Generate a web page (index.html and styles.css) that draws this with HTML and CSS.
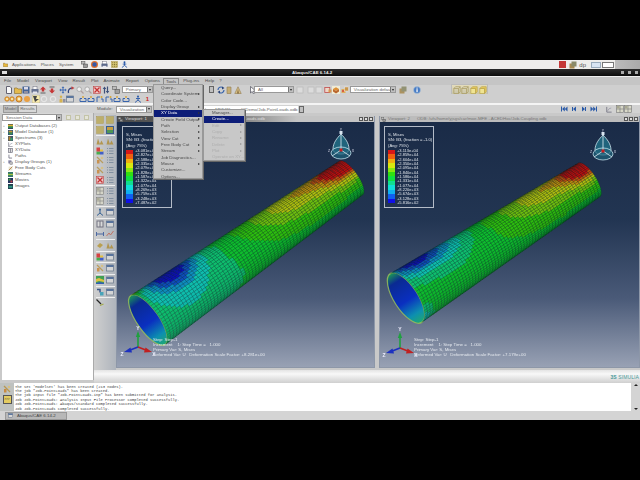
FILE: index.html
```html
<!DOCTYPE html>
<html lang="en">
<head>
<meta charset="utf-8">
<title>Abaqus/CAE 6.14-2</title>
<link rel="stylesheet" href="styles.css">
</head>
<body>
<svg class="defs" width="0" height="0" aria-hidden="true">
  <symbol id="doc" viewBox="0 0 8 8"><path d="M1.500.5h3.500l1.500 1.500v5.500h-5z" fill="#fff" stroke="#556"/></symbol>
  <symbol id="folder" viewBox="0 0 8 8"><path d="M.5 2h2.500l1 1h3.500v4.500h-7z" fill="#e8b83c" stroke="#8a6a20" stroke-width=".7"/></symbol>
  <symbol id="save" viewBox="0 0 8 8"><rect x=".5" y=".5" width="7" height="7" fill="#33558c"/><rect x="2" y="1" width="4" height="2.500" fill="#dde"/><rect x="2" y="5" width="4" height="2.500" fill="#889"/></symbol>
  <symbol id="print" viewBox="0 0 8 8"><rect x="2" y=".5" width="4" height="3" fill="#fff" stroke="#667" stroke-width=".5"/><rect x=".5" y="3" width="7" height="3.500" fill="#5a6788"/><rect x="2" y="5.500" width="4" height="2" fill="#e8e8f0"/></symbol>
  <symbol id="up" viewBox="0 0 8 8"><path d="M4 .5l3 3h-1.800v2h-2.400v-2h-1.800z" fill="#c42222"/><rect x="1.500" y="6.500" width="5" height="1" fill="#555"/></symbol>
  <symbol id="down" viewBox="0 0 8 8"><rect x="1.500" y=".5" width="5" height="1" fill="#555"/><path d="M4 7.500l3-3h-1.800v-2h-2.400v2h-1.800z" fill="#c42222"/></symbol>
  <symbol id="move" viewBox="0 0 8 8"><path d="M4 .3l1.400 1.700h-.9v1.500h1.500v-.9l1.700 1.400-1.700 1.400v-.9h-1.500v1.500h.9l-1.400 1.700-1.400-1.700h.9v-1.500h-1.500v.9l-1.700-1.400 1.700-1.400v.9h1.500v-1.500h-.9z" fill="#2f5fb0"/></symbol>
  <symbol id="rot" viewBox="0 0 8 8"><path d="M1.500 7c-.8-3 1-5 4-5" fill="none" stroke="#1c3070" stroke-width="1.300"/><path d="M4.500.2l3 1.800-3 1.800z" fill="#c03030"/></symbol>
  <symbol id="mag" viewBox="0 0 8 8"><circle cx="3.200" cy="3.200" r="2.300" fill="#f4f4f4" stroke="#aaa"/><path d="M5 5l2.500 2.500" stroke="#a99" stroke-width="1.200"/></symbol>
  <symbol id="fit" viewBox="0 0 8 8"><rect x=".5" y=".5" width="7" height="7" fill="#f4c8c8" stroke="#b33" stroke-width=".6"/><path d="M1.500 1.500l5 5M6.500 1.500l-5 5" stroke="#c41e1e" stroke-width="1.300"/></symbol>
  <symbol id="ud" viewBox="0 0 8 8"><path d="M2.500.5l1.800 2.500h-1.200v4.500h-1.200v-4.500h-1.200zM5.500 7.500l1.800-2.500h-1.200v-4.500h-1.200v4.500h-1.200z" fill="#2a3f70"/></symbol>
  <symbol id="view" viewBox="0 0 8 8"><rect x=".5" y=".5" width="4" height="3" fill="#bbb" stroke="#555" stroke-width=".6"/><rect x="3" y="3.500" width="4.500" height="4" fill="#999" stroke="#444" stroke-width=".6"/></symbol>
  <symbol id="ring" viewBox="0 0 8 8"><circle cx="4" cy="4" r="3" fill="#f0a830" stroke="#c47010"/><circle cx="4" cy="4" r="1.400" fill="#fff2c0"/></symbol>
  <symbol id="ball" viewBox="0 0 8 8"><circle cx="4" cy="4" r="3" fill="#ee9a30"/></symbol>
  <symbol id="dark" viewBox="0 0 8 8"><rect width="8" height="8" fill="#fff0a8" stroke="#888" stroke-width=".5"/><path d="M1 1h4l-1 3h3l-4 3z" fill="#333"/></symbol>
  <symbol id="faint" viewBox="0 0 8 8"><circle cx="4" cy="4" r="2.700" fill="none" stroke="#e8e8e8" stroke-width="1.200"/></symbol>
  <symbol id="fig" viewBox="0 0 8 8"><circle cx="3" cy="1.800" r="1.200" fill="#d8b040"/><path d="M1.500 7.500v-3l1.500-1 1.500 1v3z" fill="#d8b040"/><rect x="5" y="4" width="2.500" height="3.500" fill="#889"/></symbol>
  <symbol id="panel" viewBox="0 0 8 8"><rect x=".5" y="1" width="7" height="6" fill="#d8d8d8" stroke="#5a6a80" stroke-width=".7"/><rect x=".5" y="1" width="7" height="2" fill="#4c6a98"/></symbol>
  <symbol id="brk" viewBox="0 0 8 8"><path d="M1 6.500v-3h2M7 6.500v-3h-2" fill="none" stroke="#2456a8"/><circle cx="4" cy="2" r=".9" fill="#d8a020"/><rect x="1" y="6" width="6" height="1" fill="#2456a8"/></symbol>
  <symbol id="bigl" viewBox="0 0 8 8"><path d="M1 7v-5h3M7 7v-3h-2" fill="none" stroke="#2456a8"/><circle cx="5.500" cy="2" r="1" fill="#d8a020"/></symbol>
  <symbol id="man" viewBox="0 0 8 8"><circle cx="4" cy="1.500" r="1.100" fill="#2456a8"/><path d="M4 2.500v2.500M1 7.500l3-2.500 3 2.500M2 3.500h4" stroke="#2456a8" fill="none"/></symbol>
  <symbol id="books" viewBox="0 0 8 8"><path d="M2 1h4v6.500h-4z" fill="#d8bc78" stroke="#8a7040" stroke-width=".6"/><path d="M3 1v6.500M5 1v6.500" stroke="#8a7040" stroke-width=".5"/></symbol>
  <symbol id="tent" viewBox="0 0 8 8"><path d="M4 .8l3.200 6.700h-6.400z" fill="#d8bc78" stroke="#8a7040" stroke-width=".6"/><path d="M4 3l1 4.500h-2z" fill="#806030"/></symbol>
  <symbol id="refresh" viewBox="0 0 8 8"><path d="M1 4a3 3 0 0 1 5-2.200" fill="none" stroke="#2456a8" stroke-width="1.200"/><path d="M7 4a3 3 0 0 1-5 2.200" fill="none" stroke="#2456a8" stroke-width="1.200"/><path d="M5 .5l2.500 1.500-2.500 1.500zM3 7.500l-2.500-1.500 2.500-1.500z" fill="#14306c"/></symbol>
  <symbol id="cursor" viewBox="0 0 8 8"><path d="M1.500.5v6.500l1.700-1.500 1.200 2.300 1.200-.6-1.200-2.200h2.300z" fill="#fff" stroke="#223" stroke-width=".6"/></symbol>
  <symbol id="lite" viewBox="0 0 8 8"><rect x="1" y="1" width="6" height="6" fill="#dedede" stroke="#b8b8b8" stroke-width=".7"/></symbol>
  <symbol id="redb" viewBox="0 0 8 8"><rect x=".8" y="1.500" width="5" height="5" fill="#f2d8c8" stroke="#c03a3a" stroke-width=".8"/><rect x="4.500" y="3.500" width="3" height="3" fill="#d89040"/></symbol>
  <symbol id="orng" viewBox="0 0 8 8"><rect width="8" height="8" fill="#f4f0d8"/><path d="M1 3l3-1.800 3 1.800-3 2z" fill="#e08820"/><path d="M1 3v2.500l3 2 3-2v-2.500l-3 2z" fill="#b85818"/></symbol>
  <symbol id="cubes" viewBox="0 0 8 8"><rect x=".5" y="3" width="4" height="4" fill="#e2a848"/><rect x="3.500" y="1" width="4" height="4" fill="#c8903c" stroke="#fff" stroke-width=".4"/><rect x="1" y="4" width="2" height="2" fill="#d85030"/></symbol>
  <symbol id="gbox" viewBox="0 0 8 8"><rect x=".5" y="2.500" width="5" height="5" fill="#a88a50"/><rect x="2.500" y=".5" width="5" height="5" fill="#8a8a68"/></symbol>
  <symbol id="info" viewBox="0 0 8 8"><circle cx="4" cy="4" r="3.500" fill="#3470c4" stroke="#bcd" stroke-width=".5"/><rect x="3.400" y="3.200" width="1.300" height="3" fill="#fff"/><rect x="3.400" y="1.600" width="1.300" height="1" fill="#fff"/></symbol>
  <symbol id="cube0" viewBox="0 0 8 8"><path d="M.8 2.500h4.700v5h-4.700zM.8 2.500l1.800-1.800h4.600l-1.700 1.800M5.500 7.500l1.700-1.800v-5" fill="none" stroke="#a89a60" stroke-width=".8"/></symbol>
  <symbol id="cube1" viewBox="0 0 8 8"><path d="M.8 2.500h4.700v5h-4.700z" fill="#f4e890" stroke="#b8a040" stroke-width=".7"/><path d="M.8 2.500l1.800-1.800h4.600v5l-1.700 1.800v-5z" fill="#e8c850" stroke="#b8a040" stroke-width=".7"/></symbol>
  <symbol id="yel" viewBox="0 0 8 8"><rect x=".5" y=".5" width="7" height="7" fill="#d8c874" stroke="#a08a40" stroke-width=".5"/><path d="M1.500 2h1M3.500 2h1M5.500 2h1M1.500 4h1M3.500 4h1M5.500 4h1M1.500 6h1M3.500 6h1M5.500 6h1" stroke="#6a5a20"/></symbol>
  <symbol id="cones" viewBox="0 0 8 8"><path d="M.5 7.500l1.500-6 2 6zM3.500 7.500l2-4 2 4z" fill="#b09040"/></symbol>
  <symbol id="ctr" viewBox="0 0 8 8"><rect x=".5" y="4.500" width="3.500" height="3" fill="#38a840"/><rect x=".5" y=".5" width="3.500" height="4" fill="#d83030"/><rect x="4" y="4.500" width="3.500" height="3" fill="#3050c8"/><rect x="4" y="2.500" width="3" height="2" fill="#e8c030"/></symbol>
  <symbol id="pen" viewBox="0 0 8 8"><path d="M1 1l6 6" stroke="#b89850" stroke-width="1.300"/><rect x="1" y="4" width="2.500" height="3.500" fill="#c88a40"/><circle cx="6" cy="2" r="1.300" fill="#d8c080"/></symbol>
  <symbol id="list" viewBox="0 0 8 8"><path d="M1 1.500h1M3 1.500h4.500M1 4h1M3 4h4.500M1 6.500h1M3 6.500h4.500" stroke="#7a8a9c"/></symbol>
  <symbol id="grid" viewBox="0 0 8 8"><rect x=".5" y=".5" width="7" height="7" fill="#d8d8c8" stroke="#777"  stroke-width=".6"/><path d="M4 .5v7M.5 4h7" stroke="#777" stroke-width=".6"/><rect x="1" y="1" width="2.500" height="2.500" fill="#a8a890"/></symbol>
  <symbol id="tri" viewBox="0 0 8 8"><circle cx="4" cy="1.500" r="1" fill="#24548c"/><path d="M4 2v3M4 5l-3 2.500M4 5l3 2.500" stroke="#24548c"/></symbol>
  <symbol id="dim" viewBox="0 0 8 8"><path d="M.5 4h7" stroke="#3c5c9c"/><path d="M.5 2v4M7.500 2v4" stroke="#3c5c9c"/></symbol>
  <symbol id="wave" viewBox="0 0 8 8"><path d="M.5 6l2.500-3 1.500 2 3-4" fill="none" stroke="#c06a5a"/></symbol>
  <symbol id="bronze" viewBox="0 0 8 8"><path d="M1 5l3-3 3 2-3 3z" fill="#b89a40"/></symbol>
  <symbol id="mapg" viewBox="0 0 8 8"><rect width="8" height="8" fill="#2f9a44"/><path d="M0 3l3-1 5 2v2l-5-1-3 1z" fill="#e0c030"/><path d="M0 7l4-1 4 1v1h-8z" fill="#2050b0"/></symbol>
  <symbol id="strm" viewBox="0 0 8 8"><path d="M1 1.500h3v3" fill="none" stroke="#284880" stroke-width="1.500"/><rect x="4" y="4" width="3.500" height="3.500" fill="#38a0b8"/></symbol>
  <symbol id="tool" viewBox="0 0 8 8"><path d="M.5.5l4.500 4.500" stroke="#111" stroke-width="1.300"/><path d="M4 6.500l3.500-1.500" stroke="#a0a838" stroke-width="1.300"/></symbol>
  <symbol id="first" viewBox="0 0 8 8"><path d="M1 1.500h1v5h-1zM7.500 1.500v5l-2.700-2.500zM4.800 1.500v5l-2.700-2.500z" fill="#2a5aa8"/></symbol>
  <symbol id="prev" viewBox="0 0 8 8"><path d="M6 1.500v5l-3-2.500zM2 2h1v4h-1z" fill="#2a5aa8"/></symbol>
  <symbol id="next" viewBox="0 0 8 8"><path d="M2 1.500v5l3-2.500zM5 2h1v4h-1z" fill="#2a5aa8"/></symbol>
  <symbol id="last" viewBox="0 0 8 8"><path d="M7 1.500h-1v5h1zM.5 1.500v5l2.700-2.500zM3.200 1.500v5l2.700-2.500z" fill="#2a5aa8"/></symbol>
  <symbol id="t-odb" viewBox="0 0 8 8"><rect width="8" height="8" fill="#304860"/><rect y="1" width="8" height="3" fill="#e0b030"/><rect y="4" width="8" height="2" fill="#30a050"/></symbol>
  <symbol id="t-mod" viewBox="0 0 8 8"><rect width="8" height="8" fill="#2a5088"/><rect x="1" y="1" width="6" height="3" fill="#c89830"/><rect x="1" y="4" width="6" height="3" fill="#409048"/></symbol>
  <symbol id="t-spec" viewBox="0 0 8 8"><rect width="8" height="8" fill="#485868"/><rect x="1" y="1" width="3" height="6" fill="#b08030"/><rect x="4" y="3" width="3" height="4" fill="#30a070"/></symbol>
  <symbol id="t-xy" viewBox="0 0 8 8"><path d="M1 .5v7h6.500" fill="none" stroke="#667" /><path d="M2 6l2-3 3-1" fill="none" stroke="#99a"/></symbol>
  <symbol id="t-tab" viewBox="0 0 8 8"><rect x="1" y="1" width="6" height="6" fill="#ddd" stroke="#667"/><path d="M4 1v6" stroke="#667"/></symbol>
  <symbol id="t-path" viewBox="0 0 8 8"><path d="M1.500 1v5.500h5" fill="none" stroke="#667" stroke-width="1.200"/></symbol>
  <symbol id="t-dg" viewBox="0 0 8 8"><rect x=".5" y=".5" width="5" height="5" fill="#88a" /><rect x="3" y="3" width="4.500" height="4.500" fill="#bbb" stroke="#667" stroke-width=".5"/></symbol>
  <symbol id="t-fb" viewBox="0 0 8 8"><rect x="1" y="1" width="6" height="6" fill="#e8e4d0"/><path d="M1 7l6-6" stroke="#a87030" stroke-width="1.200"/></symbol>
  <symbol id="t-st" viewBox="0 0 8 8"><rect width="8" height="8" fill="#38786a"/><rect y="3" width="8" height="2" fill="#a0c840"/></symbol>
  <symbol id="t-mv" viewBox="0 0 8 8"><rect width="8" height="8" fill="#243060"/><rect x="1" y="1" width="3" height="3" fill="#40a040"/><rect x="4" y="4" width="3" height="3" fill="#c04040"/></symbol>
  <symbol id="t-im" viewBox="0 0 8 8"><rect width="8" height="8" fill="#204050"/><rect x="1" y="3" width="6" height="3" fill="#309a80"/></symbol>
</svg>

<div class="screen">
  <div class="letterbox top"></div>

  <div class="gnome">
    <svg class="ic-s foot"><use href="#folder"/></svg>
    <span class="g-item">Applications</span>
    <span class="g-item">Places</span>
    <span class="g-item">System</span>
    <svg class="ic g-launch"><use href="#view"/></svg>
    <span class="ffox"></span>
    <svg class="ic g-launch"><use href="#print"/></svg>
    <svg class="ic g-launch"><use href="#yel"/></svg>
    <svg class="ic g-launch"><use href="#man"/></svg>
    <span class="grow"></span>
    <span class="g-red"></span>
    <svg class="ic"><use href="#gbox"/></svg>
    <span class="g-dp">dp</span>
    <span class="g-screen"></span>
    <span class="g-pager"></span>
    <span class="g-shade"></span>
  </div>

  <div class="titlebar">
    <span class="t-icon"></span>
    <span class="t-text">Abaqus/CAE 6.14-2</span>
    <span class="t-btns"><i></i><i></i><i></i></span>
  </div>

  <nav class="menubar">
    <span class="m1">File</span><span class="m2">Model</span><span class="m3">Viewport</span><span class="m4">View</span><span class="m5">Result</span><span class="m6">Plot</span><span class="m7">Animate</span><span class="m8">Report</span><span class="m9">Options</span><span class="m-on">Tools</span><span class="m10">Plug-ins</span><span class="m11">Help</span><span class="m12">?</span>
  </nav>

  <div class="toolbar tb1">
    <svg class="ic"><use href="#doc"/></svg>
    <svg class="ic"><use href="#folder"/></svg>
    <svg class="ic"><use href="#save"/></svg>
    <svg class="ic"><use href="#print"/></svg>
    <svg class="ic"><use href="#up"/></svg>
    <svg class="ic"><use href="#down"/></svg>
    <span class="s2"></span>
    <svg class="ic"><use href="#move"/></svg>
    <svg class="ic"><use href="#rot"/></svg>
    <svg class="ic"><use href="#mag"/></svg>
    <svg class="ic"><use href="#mag"/></svg>
    <svg class="ic"><use href="#fit"/></svg>
    <svg class="ic"><use href="#ud"/></svg>
    <span class="s2"></span>
    <svg class="ic"><use href="#view"/></svg>
    <span class="combo c-primary">Primary<b></b></span>
    <span class="combo-arrow"></span>
    <svg class="ic gap3"><use href="#refresh"/></svg>
    <svg class="ic"><use href="#books"/></svg>
    <svg class="ic"><use href="#tent"/></svg>
    <span class="s5"></span>
    <svg class="ic"><use href="#cursor"/></svg>
    <span class="combo c-all">All<b></b></span>
    <svg class="ic"><use href="#lite"/></svg>
    <span class="s2"></span>
    <svg class="ic"><use href="#lite"/></svg>
    <svg class="ic"><use href="#lite"/></svg>
    <svg class="ic"><use href="#redb"/></svg>
    <svg class="ic"><use href="#orng"/></svg>
    <svg class="ic"><use href="#cubes"/></svg>
    <span class="combo c-vis">Visualization defaults<b></b></span>
    <svg class="ic"><use href="#gbox"/></svg>
    <span class="s5"></span>
    <svg class="ic"><use href="#info"/></svg>
    <span class="cube-group">
      <svg class="ic"><use href="#cube0"/></svg>
      <svg class="ic"><use href="#cube0"/></svg>
      <svg class="ic"><use href="#cube1"/></svg>
      <svg class="ic"><use href="#cube1"/></svg>
    </span>
  </div>

  <div class="toolbar tb2">
    <svg class="ic ic-n"><use href="#ring"/></svg>
    <svg class="ic ic-n"><use href="#ring"/></svg>
    <svg class="ic"><use href="#ring"/></svg>
    <svg class="ic"><use href="#ball"/></svg>
    <svg class="ic"><use href="#dark"/></svg>
    <svg class="ic"><use href="#faint"/></svg>
    <svg class="ic"><use href="#faint"/></svg>
    <svg class="ic"><use href="#fig"/></svg>
    <svg class="ic"><use href="#panel"/></svg>
    <span class="s4"></span>
    <svg class="ic"><use href="#brk"/></svg>
    <svg class="ic"><use href="#brk"/></svg>
    <svg class="ic"><use href="#bigl"/></svg>
    <svg class="ic"><use href="#bigl"/></svg>
    <svg class="ic"><use href="#brk"/></svg>
    <svg class="ic"><use href="#brk"/></svg>
    <span class="s4"></span>
    <svg class="ic"><use href="#man"/></svg>
    <span class="num">1</span>
    <span class="num">2</span>
  </div>

  <div class="whiteline"></div>

  <div class="contextbar">
    <span class="ctx-label">Module:</span>
    <span class="combo c-mod">Visualization<b></b></span>
    <span class="ctx-gap"></span>
    <span class="ctx-odb">/ufs/home/yjsgs/car/mes.MFE/Woman/ODemo/Job-PointLoads.odb</span>
    <span class="combo-arrow"></span>
    <span class="grow"></span>
    <svg class="ic a-ic"><use href="#first"/></svg>
    <svg class="ic a-ic"><use href="#prev"/></svg>
    <svg class="ic a-ic"><use href="#next"/></svg>
    <svg class="ic a-ic a-end"><use href="#last"/></svg>
    <svg class="ic ctx-i1"><use href="#t-xy"/></svg>
    <svg class="ic"><use href="#grid"/></svg>
    <svg class="ic"><use href="#grid"/></svg>
  </div>

  <div class="work">
    <aside class="left">
      <div class="tabs"><span class="tab">Model</span><span class="tab tab-on">Results</span></div>
      <div class="treebox">
        <div class="tree-head">
          <span class="combo c-sess">Session Data<b></b></span>
          <span class="tree-tools"><i></i><i></i><i></i></span>
        </div>
        <ul class="tree">
          <li><em>+</em><svg class="ic-s"><use href="#t-odb"/></svg>Output Databases (2)</li>
          <li><em>+</em><svg class="ic-s"><use href="#t-mod"/></svg>Model Database (1)</li>
          <li><em>+</em><svg class="ic-s"><use href="#t-spec"/></svg>Spectrums (3)</li>
          <li><em></em><svg class="ic-s"><use href="#t-xy"/></svg>XYPlots</li>
          <li><em></em><svg class="ic-s"><use href="#t-tab"/></svg>XYData</li>
          <li><em></em><svg class="ic-s"><use href="#t-path"/></svg>Paths</li>
          <li><em>+</em><svg class="ic-s"><use href="#t-dg"/></svg>Display Groups (1)</li>
          <li><em></em><svg class="ic-s"><use href="#t-fb"/></svg>Free Body Cuts</li>
          <li><em></em><svg class="ic-s"><use href="#t-st"/></svg>Streams</li>
          <li><em></em><svg class="ic-s"><use href="#t-mv"/></svg>Movies</li>
          <li><em></em><svg class="ic-s"><use href="#t-im"/></svg>Images</li>
        </ul>
      </div>
    </aside>

    <div class="right">
      <div class="canvasrow">
        <div class="toolbox">
          <div class="tbx"><svg class="ic"><use href="#yel"/></svg><svg class="ic"><use href="#yel"/></svg></div>
          <div class="tbx"><svg class="ic"><use href="#yel"/></svg><svg class="ic"><use href="#t-mod"/></svg></div>
          <hr>
          <div class="tbx"><svg class="ic"><use href="#cones"/></svg><svg class="ic"><use href="#cones"/></svg></div>
          <div class="tbx"><svg class="ic"><use href="#ctr"/></svg><svg class="ic"><use href="#list"/></svg></div>
          <div class="tbx"><svg class="ic"><use href="#pen"/></svg><svg class="ic"><use href="#list"/></svg></div>
          <div class="tbx"><svg class="ic"><use href="#pen"/></svg><svg class="ic"><use href="#list"/></svg></div>
          <div class="tbx"><svg class="ic"><use href="#fit"/></svg><svg class="ic"><use href="#list"/></svg></div>
          <hr>
          <div class="tbx"><svg class="ic"><use href="#grid"/></svg><svg class="ic"><use href="#list"/></svg></div>
          <div class="tbx"><svg class="ic"><use href="#grid"/></svg><svg class="ic"><use href="#list"/></svg></div>
          <hr>
          <div class="tbx"><svg class="ic"><use href="#tri"/></svg><svg class="ic"><use href="#panel"/></svg></div>
          <hr>
          <div class="tbx"><svg class="ic"><use href="#t-tab"/></svg><svg class="ic"><use href="#panel"/></svg></div>
          <div class="tbx"><svg class="ic"><use href="#dim"/></svg><svg class="ic"><use href="#wave"/></svg></div>
          <hr>
          <div class="tbx"><svg class="ic"><use href="#bronze"/></svg><svg class="ic"><use href="#cones"/></svg></div>
          <hr>
          <div class="tbx"><svg class="ic"><use href="#ctr"/></svg><svg class="ic"><use href="#panel"/></svg></div>
          <hr>
          <div class="tbx"><svg class="ic"><use href="#pen"/></svg><svg class="ic"><use href="#panel"/></svg></div>
          <hr>
          <div class="tbx"><svg class="ic"><use href="#mapg"/></svg><svg class="ic"><use href="#panel"/></svg></div>
          <hr>
          <div class="tbx"><svg class="ic"><use href="#strm"/></svg><svg class="ic"><use href="#panel"/></svg></div>
          <hr>
          <div class="tbx"><svg class="ic"><use href="#tool"/></svg></div>
        </div>

        <section class="vp vp1">
          <header class="vp-title vp-title-on">
            <svg class="ic-s"><use href="#view"/></svg>
            <span class="vp-name">Viewport: 1</span>
            <span class="vp-odb">ODB: /ufs/home/yjsgs/car/mes.MFE/Job-PointLoads.odb</span>
            <span class="vp-btns"><i></i><i></i><i></i></span>
          </header>
          <div class="vp-canvas" data-tube="1">
            <canvas class="fe"></canvas>
            <div class="legend">
              <p>S, Mises</p>
              <p>SN: B3 ,(fraction = -1.0)</p>
              <p>(Avg: 75%)</p>
              <div class="scale">
                <div class="bar"></div>
                <ul>
                  <li>+3.081e+04</li><li>+2.827e+04</li><li>+2.588e+04</li><li>+2.335e+04</li><li>+2.079e+04</li><li>+1.828e+04</li><li>+1.587e+04</li><li>+1.322e+04</li><li>+1.077e+04</li><li>+8.269e+03</li><li>+5.759e+03</li><li>+3.248e+03</li><li>+7.487e+02</li>
                </ul>
              </div>
            </div>
            <svg class="compass" viewBox="0 0 26 34">
              <path d="M13 5c4 4 8 9 8 15 0 3-3 5-8 5s-8-2-8-5c0-6 4-11 8-15z" fill="#20647c" stroke="#cfe4ee" stroke-width=".8"/>
              <ellipse cx="13" cy="24" rx="10" ry="6" fill="#20647c" fill-opacity=".7" stroke="#bfe0ea" stroke-width=".8"/>
              <path d="M13 3v18M4 27l9-6 9 6" stroke="#dfeef4" stroke-width=".8" fill="none"/>
              <rect x="11.500" y="2" width="3" height="3" fill="#d8e4f0"/>
              <rect x="11.500" y="19.500" width="3" height="3" fill="#c82020"/>
              <text x="13" y="2" class="c-lab">Y</text><text x="1" y="23" class="c-lab">Z</text><text x="25" y="23" class="c-lab">X</text>
            </svg>
            <svg class="triad" viewBox="0 0 34 30">
              <path d="M17 20v-11" stroke="#20a040" stroke-width="1.600"/><path d="M14.800 10l2.200-6 2.200 6z" fill="#20a040"/>
              <path d="M17 20l-9 3.500" stroke="#1c30c0" stroke-width="1.600"/><path d="M9.500 20.500l-6.500 4.500 8 .5z" fill="#1c30c0"/>
              <path d="M17 20l9 3.500" stroke="#c02020" stroke-width="1.600"/><path d="M24.500 20.500l6.500 4.500-8 .5z" fill="#c02020"/>
              <text x="17" y="3" class="t-lab">Y</text><text x="1" y="29" class="t-lab">Z</text><text x="33" y="29" class="t-lab">X</text>
            </svg>
            <div class="note">
              <p>Step: Step-1</p>
              <p>Increment &nbsp;&nbsp; 1: Step Time = &nbsp; 1.000</p>
              <p>Primary Var: S, Mises</p>
              <p>Deformed Var: U &nbsp; Deformation Scale Factor: +8.281e+00</p>
            </div>
          </div>
        </section>

        <section class="vp vp2">
          <header class="vp-title">
            <svg class="ic-s"><use href="#view"/></svg>
            <span class="vp-name">Viewport: 2</span>
            <span class="vp-odb">ODB: /ufs/home/yjsgs/car/moe-MFE - ACEDHoc/Job-Coupling.odb</span>
            <span class="vp-btns"><i></i><i></i><i></i></span>
          </header>
          <div class="vp-canvas" data-tube="2">
            <canvas class="fe"></canvas>
            <div class="legend">
              <p>S, Mises</p>
              <p>SN: B3, (fraction = -1.0)</p>
              <p>(Avg: 75%)</p>
              <div class="scale">
                <div class="bar"></div>
                <ul>
                  <li>+3.113e+04</li><li>+2.859e+04</li><li>+2.604e+04</li><li>+2.350e+04</li><li>+2.095e+04</li><li>+1.840e+04</li><li>+1.586e+04</li><li>+1.331e+04</li><li>+1.077e+04</li><li>+8.220e+03</li><li>+5.674e+03</li><li>+3.128e+03</li><li>+5.816e+02</li>
                </ul>
              </div>
            </div>
            <svg class="compass" viewBox="0 0 26 34">
              <path d="M13 5c4 4 8 9 8 15 0 3-3 5-8 5s-8-2-8-5c0-6 4-11 8-15z" fill="#20647c" stroke="#cfe4ee" stroke-width=".8"/>
              <ellipse cx="13" cy="24" rx="10" ry="6" fill="#20647c" fill-opacity=".7" stroke="#bfe0ea" stroke-width=".8"/>
              <path d="M13 3v18M4 27l9-6 9 6" stroke="#dfeef4" stroke-width=".8" fill="none"/>
              <rect x="11.500" y="2" width="3" height="3" fill="#d8e4f0"/>
              <rect x="11.500" y="19.500" width="3" height="3" fill="#c82020"/>
              <text x="13" y="2" class="c-lab">Y</text><text x="1" y="23" class="c-lab">Z</text><text x="25" y="23" class="c-lab">X</text>
            </svg>
            <svg class="triad" viewBox="0 0 34 30">
              <path d="M17 20v-11" stroke="#20a040" stroke-width="1.600"/><path d="M14.800 10l2.200-6 2.200 6z" fill="#20a040"/>
              <path d="M17 20l-9 3.500" stroke="#1c30c0" stroke-width="1.600"/><path d="M9.500 20.500l-6.500 4.500 8 .5z" fill="#1c30c0"/>
              <path d="M17 20l9 3.500" stroke="#c02020" stroke-width="1.600"/><path d="M24.500 20.500l6.500 4.500-8 .5z" fill="#c02020"/>
              <text x="17" y="3" class="t-lab">Y</text><text x="1" y="29" class="t-lab">Z</text><text x="33" y="29" class="t-lab">X</text>
            </svg>
            <div class="note">
              <p>Step: Step-1</p>
              <p>Increment &nbsp;&nbsp; 1: Step Time = &nbsp; 1.000</p>
              <p>Primary Var: S, Mises</p>
              <p>Deformed Var: U &nbsp; Deformation Scale Factor: +7.179e+00</p>
            </div>
          </div>
        </section>
      </div>
      <div class="strip"><span class="simulia"><b>3S</b> SIMULIA</span></div>
    </div>
  </div>

  <div class="messages">
    <div class="msg-tools">
      <svg class="ic msg-ic"><use href="#pen"/></svg>
      <span class="msg-term">&gt;&gt;&gt;</span>
    </div>
    <pre class="msg-text">The set 'ModelSet' has been created (213 nodes).
The job "Job-PointLoads" has been created.
The job input file "Job-PointLoads.inp" has been submitted for analysis.
Job Job-PointLoads: Analysis Input File Processor completed successfully.
Job Job-PointLoads: Abaqus/Standard completed successfully.
Job Job-PointLoads completed successfully.</pre>
    <div class="msg-scroll"><i></i><i></i></div>
  </div>

  <div class="taskbar"><span class="task"><svg class="ic-s"><use href="#panel"/></svg>Abaqus/CAE 6.14-2</span></div>

  <div class="letterbox bottom"></div>

  <div class="menu tools-menu">
    <div class="mi">Query...</div>
    <div class="mi arr">Coordinate System</div>
    <div class="mi">Color Code...</div>
    <div class="mi arr">Display Group</div>
    <div class="mi arr sel">XY Data</div>
    <div class="mi arr">Create Field Output</div>
    <div class="mi arr">Path</div>
    <div class="mi arr">Selection</div>
    <div class="mi arr">View Cut</div>
    <div class="mi arr">Free Body Cut</div>
    <div class="mi arr">Stream</div>
    <div class="mi">Job Diagnostics...</div>
    <div class="mi arr">Mouse</div>
    <div class="mi">Customize...</div>
    <div class="mi">Options...</div>
  </div>
  <div class="menu xy-menu">
    <div class="mi">Manager...</div>
    <div class="mi sel">Create...</div>
    <div class="mi off arr">Edit</div>
    <div class="mi off arr">Copy</div>
    <div class="mi off arr">Rename</div>
    <div class="mi off arr">Delete</div>
    <div class="mi off arr">Plot</div>
    <div class="mi off">Operate on XY...</div>
  </div>
</div>
<script src="script.js"></script>
</body>
</html>
```

FILE: styles.css
```css
* { box-sizing: border-box; }
html, body { margin: 0; padding: 0; background: #000; }
body { font-family: "Liberation Sans", Arial, sans-serif; }
.defs { position: absolute; }
p, ul, pre { margin: 0; padding: 0; }
ul { list-style: none; }
i, em, b { font-style: normal; font-weight: normal; }

.screen {
  position: relative; width: 640px; height: 480px; overflow: hidden;
  display: flex; flex-direction: column;
  font-size: 4.4px; line-height: 6px; color: #3c3c3c;
  background: #000; filter: blur(.55px);
}
.letterbox { background: #000; flex: none; }
.top { height: 60px; }
.bottom { flex: 1; }
.grow { flex: 1; }

.ic { width: 8px; height: 8px; flex: none; margin-right: .6px; display: block; }
.ic-n { width: 6px; height: 6px; margin-right: -.7px; }
.ic-s { width: 5px; height: 5px; flex: none; display: block; }
.toolbar .ic, .toolbox .ic { opacity: .88; }

/* desktop panel */
.gnome { height: 9px; flex: none; background: #eeedeb; display: flex; align-items: center; padding-left: 3px; color: #555; }
.foot { margin-right: 4px; }
.g-item { margin-right: 5px; }
.g-item + .g-launch { margin-left: 2px; }
.g-launch { margin-right: 3px; width: 7px; height: 7px; }
.ffox { width: 7px; height: 7px; border-radius: 50%; background: radial-gradient(#3358a8 30%, #e2702a 60%); margin-right: 3px; }
.g-red { width: 7px; height: 7px; background: #c43838; margin-right: 3px; }
.g-dp { color: #555; font-size: 6px; margin: 0 5px 0 2px; }
.g-screen { width: 10px; height: 6px; background: #d8e4f2; border: 1px solid #9ab; margin-right: 1px; }
.g-pager { width: 12px; height: 6px; border: 1px solid #777; background: #fff; margin-right: 1px; }
.g-shade { width: 25px; height: 9px; background: linear-gradient(90deg, #bbb, #aaa); }

.titlebar { height: 7px; flex: none; background: linear-gradient(#2c2c2c, #0c0c0c); display: flex; align-items: center; padding: 0 2px; color: #eee; }
.t-icon { width: 5px; height: 3px; background: #ddd; }
.t-text { margin-left: 285px; font-weight: bold; }
.t-btns { margin-left: auto; display: flex; gap: 4px; }
.t-btns i { width: 3px; height: 3px; background: #aaa; }

/* menus */
.menubar { height: 9px; flex: none; background: #c5c5c5; border-top: 1px solid #efefef; display: flex; align-items: center; padding-left: 4px; color: #4a4a4a; }
.menubar span { flex: none; }
.m2 { margin-left: 6px; } .m3 { margin-left: 6px; } .m4 { margin-left: 6px; } .m5 { margin-left: 5px; }
.m6 { margin-left: 6px; } .m7 { margin-left: 5px; } .m8 { margin-left: 6px; } .m9 { margin-left: 6px; }
.m-on { margin-left: 3px; padding: 0 2px; height: 7px; border: 1px solid #8a8a8a; line-height: 5px; }
.m10 { margin-left: 4px; } .m11 { margin-left: 6px; } .m12 { margin-left: 5px; }

.toolbar { height: 9px; flex: none; background: #cfcfcf; display: flex; align-items: center; padding-left: 5px; }
.tb2 { padding-left: 4px; }
.s2 { width: 2px; height: 8px; flex: none; }
.s4 { width: 4px; height: 8px; flex: none; }
.s5 { width: 6px; flex: none; }
.gap3 { margin-left: 3px; }
.combo { position: relative; height: 7px; background: #fff; border: 1px solid #999; display: block; line-height: 5px; padding-left: 3px; flex: none; color: #666; white-space: nowrap; overflow: hidden; }
.combo b { position: absolute; right: 0; top: 0; bottom: 0; width: 5px; background: #c0c0c0; border-left: 1px solid #777; }
.combo b::after { content: ""; position: absolute; left: 1px; top: 1.500px; border: 1.200px solid transparent; border-top: 2px solid #222; }
.c-primary { width: 31px; margin: 0 56px 0 1px; }
.combo-arrow { width: 5px; height: 7px; background: #c0c0c0; border: 1px solid #666; flex: none; }
.c-all { width: 40px; margin: 0 2px 0 -3px; }
.c-vis { width: 46px; margin: 0 3px 0 0; }
.cube-group { display: flex; align-items: center; height: 11px; margin-left: 29px; padding-left: 1px; background: linear-gradient(#e4dcbc, #c8c4a8); border: 1px solid #bbb; }
.num { color: #c22; font-weight: bold; font-size: 6px; width: 9px; text-align: center; flex: none; }

.whiteline { height: 2px; flex: none; background: #f4f4f4; }

.contextbar { height: 8px; flex: none; background: #d2d2d2; display: flex; align-items: center; padding-right: 7px; color: #555; }
.ctx-label { margin-left: 97px; margin-right: 3px; }
.c-mod { width: 36px; }
.ctx-gap { width: 15px; flex: none; }
.ctx-odb { width: 131px; height: 7px; background: #fff; text-align: right; line-height: 7px; white-space: nowrap; overflow: hidden; padding-right: 2px; color: #666; flex: none; margin-right: 1px; }
.a-ic { margin-right: 2px; }
.a-end { margin-right: 8px; }
.ctx-i1 { width: 6px; height: 7px; margin-right: 4px; }

/* main */
.work { height: 270px; flex: none; display: flex; background: #c9c9c9; }
.left { width: 94px; flex: none; display: flex; flex-direction: column; padding-left: 2px; }
.tabs { height: 8px; flex: none; display: flex; padding-left: 1px; margin-top: -8px; position: relative; }
.tab { width: 15px; height: 8px; background: #bfbfbf; border: 1px solid #999; text-align: center; line-height: 6px; color: #666; }
.tab-on { width: 19px; background: #d8d8d8; }
.treebox { height: 267px; background: #fff; border-right: 1px solid #aaa; }
.tree-head { height: 8px; background: #d8d8d8; display: flex; align-items: center; padding-top: 1px; }
.c-sess { width: 60px; }
.tree-tools { display: flex; gap: 4px; margin-left: 4px; }
.tree-tools i { width: 5px; height: 5px; background: #e4e4d8; border: 1px solid #c4c4a8; }
.tree { padding-top: 2px; }
.tree li { height: 6px; display: flex; align-items: center; color: #555; white-space: nowrap; }
.tree em { width: 3px; height: 3px; flex: none; margin: 0 2px 0 1px; font-size: 3px; line-height: 3px; border: 0; color: #777; }
.tree .ic-s { margin-right: 2px; }

.right { flex: 1; display: flex; flex-direction: column; min-width: 0; }
.canvasrow { height: 257px; flex: none; display: flex; padding-top: 3px; }
.toolbox { width: 22px; flex: none; margin-top: -1px; padding: 1px 1px 0 2px; background: linear-gradient(90deg, #cfcfcf, #aeb4bc); display: flex; flex-direction: column; }
.tbx { display: flex; gap: 1px; height: 9.600px; flex: none; }
.toolbox hr { margin: 0 0 1px; border: 0; height: 1px; background: #eee; flex: none; width: 100%; }

.vp { display: flex; flex-direction: column; height: 252px; flex: none; border: 1px solid #8d97a8; border-top: 0; }
.vp1 { width: 259px; margin-right: 4px; }
.vp2 { width: 261px; }
.vp-title { height: 6px; flex: none; display: flex; align-items: center; background: #bcbcbc; padding: 0 1px; color: #777; white-space: nowrap; overflow: hidden; }
.vp-title-on { background: linear-gradient(90deg, #4a4a4a 0, #6a6a6a 40%, #c4c4c4 70%); color: #ddd; }
.vp-name { margin: 0 8px 0 2px; }
.vp2 .vp-name { margin-right: 7px; }
.vp-btns { margin-left: auto; display: flex; gap: 1px; }
.vp-btns i { width: 4px; height: 4px; background: #ddd; border: 1px solid #555; }
.vp-canvas { position: relative; flex: 1; background: linear-gradient(#1a2b47 0, #223552 40%, #4a5a78 72%, #98a1b4 100%); overflow: hidden; }
.fe { position: absolute; inset: 0; width: 100%; height: 100%; }

.legend { position: absolute; left: 5px; top: 4px; width: 50px; height: 82px; border: 1px solid #b4bcc8; padding: 5px 0 0 3px; color: #dfe4ea; line-height: 5.300px; white-space: nowrap; overflow: hidden; font-size: 4.200px; }
.vp2 .legend { left: 4px; }
.scale { display: flex; margin-top: 2px; }
.bar { width: 7px; height: 53px; flex: none; background: linear-gradient(#d81818 0 8.33%, #f06010 8.33% 16.66%, #f0b010 16.66% 25%, #d8e810 25% 33.33%, #88e810 33.33% 41.66%, #30e010 41.66% 50%, #10e040 50% 58.33%, #10e090 58.33% 66.66%, #10e0d8 66.66% 75%, #10b0f0 75% 83.33%, #1060f0 83.33% 91.66%, #1010e8 91.66% 100%); }
.scale ul { margin: -1px 0 0 2px; font-size: 4px; line-height: 4.330px; }
.scale li { height: 4.330px; }

.compass { position: absolute; left: 211px; top: 7px; width: 26px; height: 34px; overflow: visible; }
.vp2 .compass { left: 210px; top: 8px; }
.c-lab { font-size: 3.500px; fill: #dde; text-anchor: middle; }
.triad { position: absolute; left: 4px; top: 205px; width: 34px; height: 30px; overflow: visible; }
.vp2 .triad { left: 3px; top: 206px; }
.t-lab { font-size: 5px; fill: #eef; font-weight: bold; text-anchor: middle; }
.note { position: absolute; left: 36px; top: 216px; color: #e4e8ee; line-height: 4.900px; white-space: nowrap; }
.vp2 .note { left: 34px; }

.strip { flex: 1; background: linear-gradient(#e4e4e4, #f8f8f8 30%, #cfcfcf); display: flex; justify-content: flex-end; align-items: center; padding-right: 1px; }
.simulia { color: #4a9a9a; font-size: 5px; letter-spacing: .1px; }
.simulia b { font-weight: bold; }

/* message area */
.messages { height: 28px; flex: none; display: flex; background: #c8c8c8; }
.msg-tools { width: 14px; flex: none; display: flex; flex-direction: column; align-items: center; gap: 2px; padding-top: 2px; background: #bfc2c0; }
.msg-ic { margin: 0; }
.msg-term { width: 9px; height: 9px; background: #e4cc60; border: 1px solid #555; font-size: 3px; line-height: 7px; text-align: center; color: #333; }
.msg-text { flex: 1; background: #fff; font-family: "Liberation Mono", monospace; font-size: 3.760px; line-height: 4.400px; color: #3c3c3c; padding: 1.500px 0 0 1px; overflow: hidden; }
.msg-scroll { width: 9px; flex: none; display: flex; flex-direction: column; justify-content: space-between; align-items: center; background: #d4d4d4; padding: 1px 0; }
.msg-scroll i { width: 0; height: 0; border: 2.500px solid transparent; }
.msg-scroll i:first-child { border-bottom-color: #222; border-top-width: 0; }
.msg-scroll i:last-child { border-top-color: #222; border-bottom-width: 0; }

.taskbar { height: 9px; flex: none; background: #d4d4d4; display: flex; align-items: center; padding-left: 5px; }
.task { width: 62px; height: 8px; background: #b8b8b8; border: 1px solid #999; display: flex; align-items: center; gap: 4px; padding-left: 2px; color: #444; }

/* open menus */
.menu { position: absolute; background: #c4c4c4; border: 1px solid #999; box-shadow: 1px 1px 0 #666; color: #4a4a4a; }
.tools-menu { left: 153px; top: 84px; width: 50px; height: 95px; }
.xy-menu { left: 203px; top: 109px; width: 42px; height: 52px; background: #c8c8c8; }
.mi { position: relative; height: 6.330px; line-height: 6.330px; padding-left: 7px; white-space: nowrap; }
.xy-menu .mi { padding-left: 8px; }
.arr::after { content: ""; position: absolute; right: 2px; top: 1.800px; border: 1.400px solid transparent; border-left: 2px solid #333; border-right: 0; }
.sel { background: #0d1d78; color: #fff; }
.off { color: #adadad; }
.off.arr::after { border-left-color: #999; }
```

FILE: script.js
```js
(function () {
  var PAL = [[0,0,255],[0,93,255],[0,185,255],[0,255,232],[0,255,139],[0,255,46],[46,255,0],[139,255,0],[232,255,0],[255,185,0],[255,93,0],[255,0,0]];
  function g(x, c, w) { var d = (x - c) / w; return Math.exp(-d * d); }

  var TUBES = {
    1: { ox: 117, oy: 122, A: [148, 320], B: [351, 178], rA: 30, rB: 20.5, mA: 11, mB: 7,
      val: function (s, t) {
        var v = 0.46;
        v += 0.58 * g(s, 0.98, 0.1) * g(t, 0.18, 0.28);
        v += 0.3 * g(s, 0.78, 0.26) * g(t, 0.2, 0.38);
        v -= 0.42 * g(s, 0.16, 0.12) * g(t, 0.1, 0.28);
        v -= 0.12 * g(s, 0.16, 0.26) * g(t, 0.55, 0.6);
        v += 0.3 * g(s, 0, 0.04) * g(t, 0.04, 0.12);
        return v;
      } },
    2: { ox: 381, oy: 122, A: [407, 298], B: [590, 180], rA: 29, rB: 20, mA: 12, mB: 7,
      val: function (s, t) {
        var v = 0.47;
        v += 0.58 * g(s, 0.97, 0.09) * g(t, 0.18, 0.28);
        v += 0.28 * g(s, 0.78, 0.24) * g(t, 0.2, 0.38);
        v -= 0.44 * g(s, 0.09, 0.13) * g(t, 0.08, 0.28);
        v -= 0.17 * g(s, 0.26, 0.13) * g(t, 0.14, 0.34);
        v -= 0.2 * g(s, 0, 0.05) * g(t, 0.9, 0.2);
        return v;
      } }
  };

  function color(v, light) {
    var i = Math.max(0, Math.min(11, Math.floor(v * 12)));
    var c = PAL[i], m = 0.18, o = [];
    for (var k = 0; k < 3; k++) o[k] = Math.round((c[k] * (1 - m) + 90 * m) * light);
    return "rgb(" + o[0] + "," + o[1] + "," + o[2] + ")";
  }

  function draw(host) {
    var T = TUBES[host.getAttribute("data-tube")];
    var cv = host.querySelector("canvas");
    var r = host.getBoundingClientRect();
    cv.width = r.width; cv.height = r.height;
    var c = cv.getContext("2d");
    c.translate(-T.ox, -T.oy);

    var dx = T.B[0] - T.A[0], dy = T.B[1] - T.A[1], L = Math.hypot(dx, dy);
    var D = [dx / L, dy / L], N = [-D[1], D[0]];
    function P(s, f) {
      var R = T.rA + (T.rB - T.rA) * s, m = T.mA + (T.mB - T.mA) * s;
      var cx = T.A[0] + dx * s, cy = T.A[1] + dy * s, sf = Math.sin(f), cf = Math.cos(f);
      return [cx + N[0] * R * sf + D[0] * m * cf, cy + N[1] * R * sf + D[1] * m * cf];
    }

    /* inside of the open end */
    c.save();
    c.beginPath();
    c.ellipse(T.A[0], T.A[1], T.rA, T.mA, Math.atan2(N[1], N[0]), 0, Math.PI * 2);
    c.closePath();
    var ig = c.createLinearGradient(T.A[0] - N[0] * T.rA, T.A[1] - N[1] * T.rA, T.A[0] + N[0] * T.rA, T.A[1] + N[1] * T.rA);
    ig.addColorStop(0, "#1b9a55"); ig.addColorStop(0.18, "#0a2a92");
    ig.addColorStop(0.55, "#0a2fc0"); ig.addColorStop(0.82, "#0d8fb0"); ig.addColorStop(1, "#1fa870");
    c.fillStyle = ig; c.fill();
    c.strokeStyle = "rgba(150,190,90,.85)"; c.lineWidth = 1.2; c.stroke();
    c.restore();

    /* outer skin */
    var NS = 62, NF = 28;
    c.lineWidth = 0.45;
    for (var i = 0; i < NS; i++) {
      for (var j = 0; j < NF; j++) {
        var s0 = i / NS, s1 = (i + 1) / NS;
        var f0 = -Math.PI / 2 + Math.PI * j / NF, f1 = -Math.PI / 2 + Math.PI * (j + 1) / NF;
        var t = (j + 0.5) / NF, s = (i + 0.5) / NS;
        var light = 0.7 + 0.14 * Math.sin(Math.PI * Math.min(1, t * 1.15));
        c.fillStyle = color(T.val(s, t), light);
        var a = P(s0, f0), b = P(s1, f0), d = P(s1, f1), e = P(s0, f1);
        c.beginPath();
        c.moveTo(a[0], a[1]); c.lineTo(b[0], b[1]); c.lineTo(d[0], d[1]); c.lineTo(e[0], e[1]);
        c.closePath();
        c.fill();
        c.strokeStyle = "rgba(0,35,20,.34)";
        c.stroke();
      }
    }
  }

  var hosts = document.querySelectorAll(".vp-canvas");
  for (var k = 0; k < hosts.length; k++) draw(hosts[k]);
})();
```
